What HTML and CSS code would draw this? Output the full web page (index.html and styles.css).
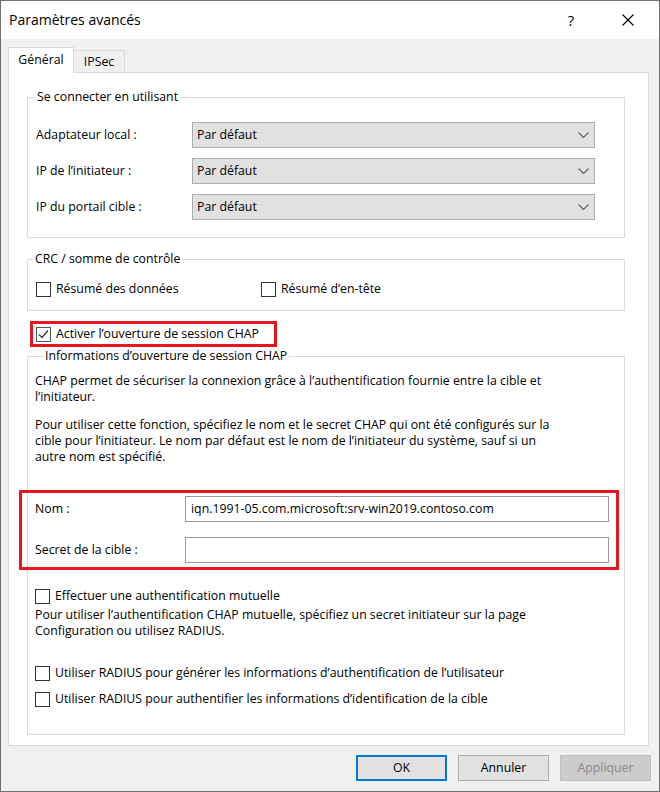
FILE: index.html
```html
<!DOCTYPE html>
<html lang="fr">
<head>
<meta charset="utf-8">
<title>Paramètres avancés</title>
<link rel="stylesheet" href="styles.css">
</head>
<body>
<div class="window">
  <div class="titlebar">
    <span class="title">Paramètres avancés</span>
    <span class="tb-btn help">?</span>
    <span class="tb-btn close"><svg width="12" height="12" viewBox="0 0 12 12"><path d="M0.5 0.5L11.5 11.5M11.5 0.5L0.5 11.5" stroke="#000" stroke-width="1.1" fill="none"/></svg></span>
  </div>
  <div class="body">
    <div class="tabs">
      <div class="tab active">Général</div>
      <div class="tab inactive">IPSec</div>
    </div>
    <div class="panel">
      <fieldset class="group g1">
        <legend>Se connecter en utilisant</legend>
        <div class="gbody g1-body">
          <div class="row">
            <span class="lbl">Adaptateur local :</span>
            <div class="combo"><span>Par défaut</span><svg class="chev" width="11" height="6" viewBox="0 0 11 6"><path d="M0.5 0.5L5.5 5.5L10.5 0.5" stroke="#606060" stroke-width="1.1" fill="none"/></svg></div>
          </div>
          <div class="row">
            <span class="lbl">IP de l’initiateur :</span>
            <div class="combo"><span>Par défaut</span><svg class="chev" width="11" height="6" viewBox="0 0 11 6"><path d="M0.5 0.5L5.5 5.5L10.5 0.5" stroke="#606060" stroke-width="1.1" fill="none"/></svg></div>
          </div>
          <div class="row">
            <span class="lbl">IP du portail cible :</span>
            <div class="combo"><span>Par défaut</span><svg class="chev" width="11" height="6" viewBox="0 0 11 6"><path d="M0.5 0.5L5.5 5.5L10.5 0.5" stroke="#606060" stroke-width="1.1" fill="none"/></svg></div>
          </div>
        </div>
      </fieldset>

      <fieldset class="group g2">
        <legend>CRC / somme de contrôle</legend>
        <div class="gbody g2-body">
          <label class="check crc1"><span class="cb"></span>Résumé des données</label>
          <label class="check"><span class="cb"></span>Résumé d’en-tête</label>
        </div>
      </fieldset>

      <div class="highlight chap-enable">
        <label class="check"><span class="cb"><svg width="13" height="13" viewBox="0 0 13 13"><path d="M2 6.5L5 9.5L11 2.5" stroke="#333" stroke-width="1.2" fill="none"/></svg></span>Activer l’ouverture de session CHAP</label>
      </div>

      <fieldset class="group g3">
        <legend>Informations d’ouverture de session CHAP</legend>
        <div class="gbody g3-body">
          <p class="para">CHAP permet de sécuriser la connexion grâce à l’authentification fournie entre la cible et<br>l’initiateur.</p>
          <p class="para p2">Pour utiliser cette fonction, spécifiez le nom et le secret CHAP qui ont été configurés sur la<br>cible pour l’initiateur. Le nom par défaut est le nom de l’initiateur du système, sauf si un<br>autre nom est spécifié.</p>
          <div class="highlight creds">
            <div class="frow">
              <span class="flbl">Nom :</span>
              <div class="textbox">iqn.1991-05.com.microsoft:srv-win2019.contoso.com</div>
            </div>
            <div class="frow">
              <span class="flbl">Secret de la cible :</span>
              <div class="textbox"></div>
            </div>
          </div>
          <label class="check mutual"><span class="cb"></span>Effectuer une authentification mutuelle</label>
          <p class="para p3">Pour utiliser l’authentification CHAP mutuelle, spécifiez un secret initiateur sur la page<br>Configuration ou utilisez RADIUS.</p>
          <label class="check radius1"><span class="cb"></span>Utiliser RADIUS pour générer les informations d’authentification de l’utilisateur</label>
          <label class="check radius2"><span class="cb"></span>Utiliser RADIUS pour authentifier les informations d’identification de la cible</label>
        </div>
      </fieldset>
    </div>
    <div class="buttons">
      <div class="btn default">OK</div>
      <div class="btn">Annuler</div>
      <div class="btn disabled">Appliquer</div>
    </div>
  </div>
</div>
</body>
</html>
```

FILE: styles.css
```css
* { box-sizing: border-box; }
html, body { margin: 0; padding: 0; }
body {
  width: 660px;
  height: 792px;
  overflow: hidden;
  font-family: "Open Sans", "Liberation Sans", sans-serif;
  font-size: 12.3px;
  line-height: 16px;
  color: #000;
  background: #f0f0f0;
}
.window {
  width: 660px;
  height: 792px;
  border: 1px solid #6f6f6f;
  display: flex;
  flex-direction: column;
  background: #f0f0f0;
}
.titlebar {
  height: 38px;
  flex: none;
  background: #fff;
  display: flex;
  align-items: center;
  padding: 0 8px 0 8px;
}
.title { flex: 1; font-size: 14px; }
.tb-btn {
  width: 46px;
  height: 38px;
  display: flex;
  align-items: center;
  justify-content: center;
}
.help { margin-right: 11px; font-size: 15px; }

.body {
  flex: 1;
  display: flex;
  flex-direction: column;
  padding: 8px 10px 0 7px;
}
.tabs {
  display: flex;
  align-items: flex-end;
  height: 26px;
  margin-bottom: -1px;
  position: relative;
  z-index: 1;
}
.tab {
  border: 1px solid #d9d9d9;
  border-bottom: none;
  display: flex;
  align-items: center;
  justify-content: center;
}
.tab.active {
  width: 66px;
  height: 26px;
  background: #fff;
  padding-bottom: 1px;
}
.tab.inactive {
  width: 51px;
  height: 22px;
  margin-bottom: 1px;
  background: #f0f0f0;
  border-left: none;
}
.panel {
  width: 641px;
  height: 674px;
  flex: none;
  background: #fff;
  border: 1px solid #d9d9d9;
  padding: 0 23px 0 18px;
}

.group {
  margin: 0;
  padding: 0;
  min-width: 0;
  border: 1px solid #dcdcdc;
}
.group legend {
  padding: 0 2px;
  line-height: 16px;
}
.g1 { margin-top: 16px; }
.g1 legend { margin-left: 7px; }
.g2 { margin-top: 13px; }
.g2 legend { margin-left: 5px; }
.g3 { margin-top: 1px; }
.g3 legend { margin-left: 15px; }

.g1-body {
  padding: 16px 29px 18px 8px;
  display: flex;
  flex-direction: column;
  gap: 10px;
}
.row { display: flex; align-items: center; height: 26px; padding-top: 1px; }
.lbl { width: 156px; flex: none; }
.combo {
  flex: 1;
  height: 26px;
  background: #e1e1e1;
  border: 1px solid #adadad;
  display: flex;
  align-items: center;
  justify-content: space-between;
  padding: 0 5px 0 4px;
}
.chev { display: block; }

.g2-body {
  padding: 14px 8px 13px 8px;
  display: flex;
}
.crc1 { width: 225px; }

.check {
  display: flex;
  align-items: center;
  height: 16px;
  white-space: nowrap;
}
.cb {
  width: 15px;
  height: 15px;
  flex: none;
  border: 1px solid #333;
  background: #fff;
  margin-right: 5px;
  display: flex;
  align-items: center;
  justify-content: center;
}
.cb svg { display: block; }

.highlight { border: 3px solid #e8171f; }
.chap-enable {
  margin: 10px 0 0 3px;
  width: 247px;
  height: 26px;
  padding-left: 3px;
  display: flex;
  align-items: center;
}
.chap-enable .cb { border-color: #555; }

.g3-body { padding: 9px 7px 27px 7px; }
.para { margin: 0; white-space: nowrap; }
.p2 { margin-top: 12px; }
.creds {
  margin: 25px -2px 0 -16px;
  padding: 3px 7px 4px 13px;
  display: flex;
  flex-direction: column;
  gap: 15px;
}
.frow { display: flex; align-items: center; height: 26px; }
.flbl { width: 150px; flex: none; }
.textbox {
  flex: 1;
  height: 26px;
  background: #fff;
  border: 1px solid #9a9a9a;
  padding: 0 5px;
  display: flex;
  align-items: center;
}
.mutual { margin-top: 18px; }
.p3 { margin-top: 3px; }
.radius1 { margin-top: 26px; }
.radius2 { margin-top: 10px; }

.buttons {
  display: flex;
  justify-content: flex-end;
  gap: 11px;
  margin-top: 9px;
  margin-right: -2px;
}
.btn {
  width: 91px;
  height: 26px;
  background: #e1e1e1;
  border: 1px solid #adadad;
  display: flex;
  align-items: center;
  justify-content: center;
}
.btn.default { border: 2px solid #0078d7; }
.btn.disabled {
  background: #cccccc;
  border-color: #bfbfbf;
  color: #8a8a8a;
}
```
